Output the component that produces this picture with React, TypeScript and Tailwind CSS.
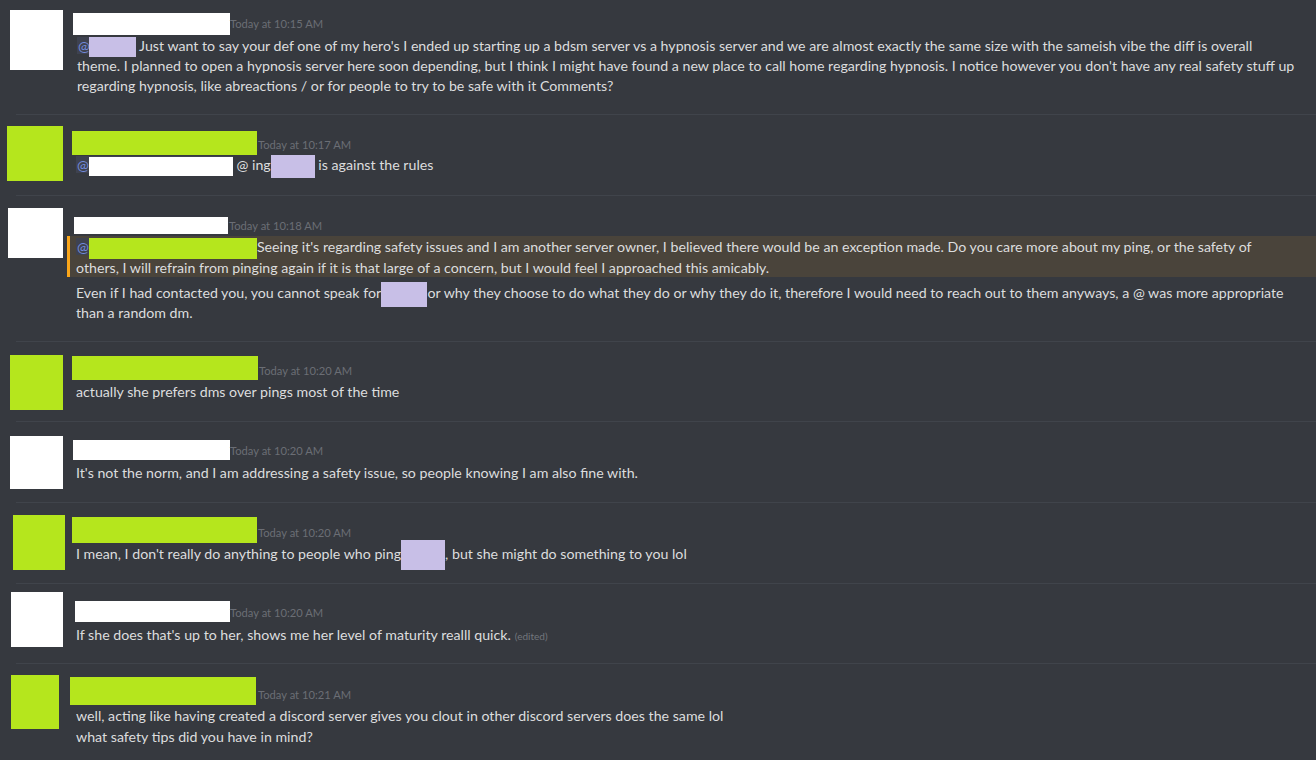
import type { ReactNode } from 'react';

const Lav = ({ className }: { className: string }) => (
  <span className={`inline-block bg-[#c8bfe7] align-middle ${className}`} />
);

const Mention = ({ children }: { children: ReactNode }) => (
  <span className="bg-[#3e4250] text-[#7289da] pl-[1px]">
    @{children}
  </span>
);

function Stamp({ time, className = '' }: { time: string; className?: string }) {
  return (
    <span className={`text-[11.2px] leading-[18px] text-[#6b6e75] whitespace-nowrap ${className}`}>
      Today at {time}
    </span>
  );
}

const Divider = () => <div className="ml-4 h-px bg-[#40444b]" />;

export default function App() {
  return (
    <div className="w-[1316px] h-[760px] overflow-hidden bg-[#36393f] text-[#dcddde] font-['Lato',sans-serif] text-[14.2px]">
      {/* 10:15 */}
      <section className="flex items-start h-[114px]">
        <div className="shrink-0 ml-[10px] mt-[10px] w-[53px] h-[60px] bg-white" />
        <div className="ml-[10px] mt-[13px] min-w-0">
          <div className="flex items-end">
            <div className="w-[157px] h-[22px] bg-white" />
            <Stamp time="10:15 AM" className="mb-[2px]" />
          </div>
          <div className="pl-[4px] mt-[1px] leading-[19.5px] whitespace-nowrap">
            <div>
              <Mention>
                <Lav className="w-[47px] h-[20px] -my-[1px] -ml-[1px]" />
              </Mention>{' '}
              Just want to say your def one of my hero's I ended up starting up a bdsm server vs a hypnosis server and we are almost exactly the same size with the sameish vibe the diff is overall
            </div>
            <div>
              theme. I planned to open a hypnosis server here soon depending, but I think I might have found a new place to call home regarding hypnosis. I notice however you don't have any real safety stuff up
            </div>
            <div>regarding hypnosis, like abreactions / or for people to try to be safe with it Comments?</div>
          </div>
        </div>
      </section>
      <Divider />

      {/* 10:17 */}
      <section className="flex items-start h-[80px]">
        <div className="shrink-0 ml-[7px] mt-[11px] w-[56px] h-[55px] bg-[#b5e61d]" />
        <div className="ml-[9px] mt-[16px]">
          <div className="flex items-end">
            <div className="w-[185px] h-[24px] bg-[#b5e61d]" />
            <Stamp time="10:17 AM" className="ml-px mb-[1px]" />
          </div>
          <div className="pl-[4px] leading-[20px] whitespace-nowrap">
            <Mention>
              <span className="inline-block w-[144px] h-[19px] bg-white align-middle -my-[1px]" />
            </Mention>{' '}
            @ ing
            <Lav className="w-[44px] h-[23px] -my-[3px]" /> is against the rules
          </div>
        </div>
      </section>
      <Divider />

      {/* 10:18 */}
      <section className="flex items-start h-[145px]">
        <div className="shrink-0 ml-[8px] mt-[12px] w-[55px] h-[50px] bg-white" />
        <div className="ml-[4px] mt-[21px] flex-1 min-w-0">
          <div className="flex items-end ml-[7px]">
            <div className="w-[154px] h-[17px] bg-white" />
            <Stamp time="10:18 AM" className="ml-px -mb-[1px]" />
          </div>
          <div className="mt-[2px] h-[41px] bg-[#4a443b] border-l-[3px] border-[#faa61a] pl-[6px] pt-[1px] leading-[20px] whitespace-nowrap">
            <div>
              <Mention>
                <span className="inline-block w-[168px] h-[21px] bg-[#b5e61d] align-middle -my-[1px]" />
              </Mention>
              Seeing it's regarding safety issues and I am another server owner, I believed there would be an exception made. Do you care more about my ping, or the safety of
            </div>
            <div>others, I will refrain from pinging again if it is that large of a concern, but I would feel I approached this amicably.</div>
          </div>
          <div className="mt-[6px] pl-[9px] leading-[19.5px] whitespace-nowrap">
            <div>
              Even if I had contacted you, you cannot speak for <Lav className="w-[46px] h-[25px] -my-[4px] -ml-[3px]" />
              or why they choose to do what they do or why they do it, therefore I would need to reach out to them anyways, a @ was more appropriate
            </div>
            <div>than a random dm.</div>
          </div>
        </div>
      </section>
      <Divider />

      {/* 10:20 */}
      <section className="flex items-start h-[79px]">
        <div className="shrink-0 ml-[10px] mt-[13px] w-[53px] h-[55px] bg-[#b5e61d]" />
        <div className="ml-[9px] mt-[14px]">
          <div className="flex items-end">
            <div className="w-[186px] h-[24px] bg-[#b5e61d]" />
            <Stamp time="10:20 AM" className="ml-px" />
          </div>
          <div className="pl-[4px] mt-[2px] leading-[20px] whitespace-nowrap">
            actually she prefers dms over pings most of the time
          </div>
        </div>
      </section>
      <Divider />

      <section className="flex items-start h-[80px]">
        <div className="shrink-0 ml-[10px] mt-[14px] w-[53px] h-[53px] bg-white" />
        <div className="ml-[10px] mt-[18px]">
          <div className="flex items-end">
            <div className="w-[157px] h-[20px] bg-white" />
            <Stamp time="10:20 AM" />
          </div>
          <div className="pl-[3px] mt-[3px] leading-[20px] whitespace-nowrap">
            It's not the norm, and I am addressing a safety issue, so people knowing I am also fine with.
          </div>
        </div>
      </section>
      <Divider />

      <section className="flex items-start h-[80px]">
        <div className="shrink-0 ml-[13px] mt-[12px] w-[52px] h-[55px] bg-[#b5e61d]" />
        <div className="ml-[7px] mt-[14px]">
          <div className="flex items-end">
            <div className="w-[185px] h-[26px] bg-[#b5e61d]" />
            <Stamp time="10:20 AM" className="ml-px mb-[1px]" />
          </div>
          <div className="pl-[4px] mt-[1px] leading-[20px] whitespace-nowrap">
            I mean, I don't really do anything to people who ping
            <Lav className="w-[44px] h-[30px] -my-[6px]" />, but she might do something to you lol
          </div>
        </div>
      </section>
      <Divider />

      <section className="flex items-start h-[79px]">
        <div className="shrink-0 ml-[11px] mt-[8px] w-[52px] h-[55px] bg-white" />
        <div className="ml-[12px] mt-[17px]">
          <div className="flex items-end">
            <div className="w-[155px] h-[21px] bg-white" />
            <Stamp time="10:20 AM" />
          </div>
          <div className="pl-[1px] mt-[3px] leading-[20px] whitespace-nowrap">
            If she does that's up to her, shows me her level of maturity realll quick.
            <span className="ml-[4px] text-[10px] text-[#72767d]">(edited)</span>
          </div>
        </div>
      </section>
      <Divider />

      {/* 10:21 */}
      <section className="flex items-start h-[96px]">
        <div className="shrink-0 ml-[11px] mt-[11px] w-[48px] h-[54px] bg-[#b5e61d]" />
        <div className="ml-[11px] mt-[13px]">
          <div className="flex items-end">
            <div className="w-[186px] h-[28px] bg-[#b5e61d]" />
            <Stamp time="10:21 AM" className="ml-[2px] mb-[1px]" />
          </div>
          <div className="pl-[6px] leading-[21px] whitespace-nowrap">
            <div>well, acting like having created a discord server gives you clout in other discord servers does the same lol</div>
            <div>what safety tips did you have in mind?</div>
          </div>
        </div>
      </section>
    </div>
  );
}
